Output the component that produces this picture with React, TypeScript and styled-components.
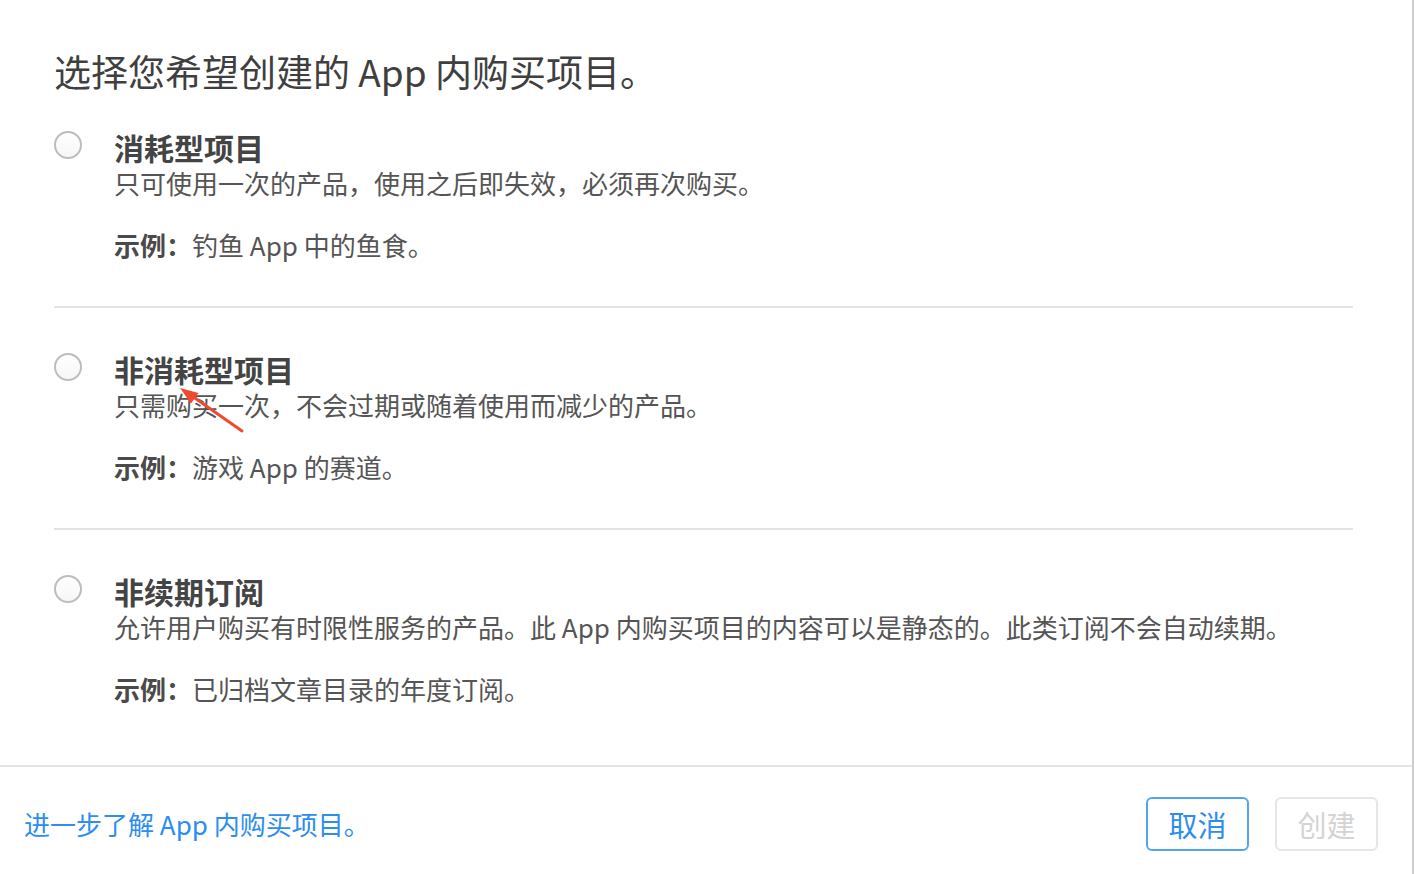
import React from 'react'
import styled, { createGlobalStyle } from 'styled-components'

const GlobalStyle = createGlobalStyle`
  html, body {
    margin: 0;
    padding: 0;
    background: #fff;
  }
  body {
    font-family: "Noto Sans CJK SC", "Liberation Sans", sans-serif;
    -webkit-font-smoothing: antialiased;
  }
`

// whole sheet, with the grey edge on its right
const Sheet = styled.div`
  position: relative;
  width: 1412px;
  height: 874px;
  border-right: 2px solid #cdcdcd;
  display: flex;
  flex-direction: column;
  background: #fff;
`

const Body = styled.div`
  flex: 1;
  padding: 48px 59px 0 54px;
`

const Heading = styled.h1`
  margin: 0 0 35px;
  font-size: 37px;
  line-height: 46px;
  font-weight: 400;
  color: #3f3f3f;
`

const Option = styled.label<{ $last?: boolean }>`
  display: grid;
  grid-template-columns: 28px 1fr;
  column-gap: 32px;
  padding: 0 0 ${p => (p.$last ? '0' : '43px')};
  margin-bottom: ${p => (p.$last ? '0' : '43px')};
  border-bottom: ${p => (p.$last ? 'none' : '2px solid #e4e4e4')};
  cursor: pointer;
`

const Radio = styled.span`
  box-sizing: border-box;
  width: 28px;
  height: 28px;
  margin-top: 2px;
  border-radius: 50%;
  border: 2px solid #bdbdbd;
  background: linear-gradient(#ffffff, #f6f6f6);
`

const OptionText = styled.div`
  display: flex;
  flex-direction: column;
`

const OptionTitle = styled.div`
  font-size: 30px;
  line-height: 36px;
  font-weight: 600;
  color: #444;
`

const OptionDesc = styled.div`
  font-size: 26px;
  line-height: 36px;
  color: #555;
`

const Example = styled.div`
  margin-top: 26px;
  font-size: 26px;
  line-height: 36px;
  color: #555;
  b {
    font-weight: 600;
    color: #4a4a4a;
  }
`

const Footer = styled.div`
  height: 109px;
  border-top: 2px solid #e4e4e4;
  box-sizing: border-box;
  padding: 30px 34px 0 24px;
  display: flex;
  align-items: flex-start;
  justify-content: space-between;
`

const LearnMore = styled.a`
  margin-top: 10px;
  font-size: 26px;
  line-height: 34px;
  color: #2d8df0;
  text-decoration: none;
`

const Buttons = styled.div`
  display: flex;
  gap: 26px;
`

const Button = styled.button<{ $disabled?: boolean }>`
  box-sizing: border-box;
  width: 103px;
  height: 54px;
  border-radius: 6px;
  background: #fff;
  font-family: inherit;
  font-size: 29px;
  line-height: 1;
  border: 2px solid ${p => (p.$disabled ? '#e6e6e6' : '#4ea6f5')};
  color: ${p => (p.$disabled ? '#d4d4d4' : '#2d8df0')};
  padding: 0;
`

const Annotation = styled.svg`
  position: absolute;
  left: 170px;
  top: 378px;
  width: 80px;
  height: 60px;
  pointer-events: none;
`

const options = [
  {
    title: '消耗型项目',
    desc: '只可使用一次的产品，使用之后即失效，必须再次购买。',
    example: '钓鱼 App 中的鱼食。',
  },
  {
    title: '非消耗型项目',
    desc: '只需购买一次，不会过期或随着使用而减少的产品。',
    example: '游戏 App 的赛道。',
  },
  {
    title: '非续期订阅',
    desc: '允许用户购买有时限性服务的产品。此 App 内购买项目的内容可以是静态的。此类订阅不会自动续期。',
    example: '已归档文章目录的年度订阅。',
  },
]

export default function App() {
  return (
    <div lang="zh-CN">
      <GlobalStyle />
      <Sheet>
        <Body>
          <Heading>选择您希望创建的 App 内购买项目。</Heading>
          {options.map((o, i) => (
            <Option key={o.title} $last={i === options.length - 1}>
              <Radio />
              <OptionText>
                <OptionTitle>{o.title}</OptionTitle>
                <OptionDesc>{o.desc}</OptionDesc>
                <Example>
                  <b>示例：</b>{o.example}
                </Example>
              </OptionText>
            </Option>
          ))}
        </Body>
        <Footer>
          <LearnMore href="#">进一步了解 App 内购买项目。</LearnMore>
          <Buttons>
            <Button>取消</Button>
            <Button $disabled disabled>创建</Button>
          </Buttons>
        </Footer>
        {/* red arrow drawn on top of the screenshot */}
        <Annotation viewBox="0 0 80 60">
          <line x1="72" y1="53" x2="22" y2="18" stroke="#f04a2e" strokeWidth="3" strokeLinecap="round" />
          <polygon points="10,10 28.5,15 21,25.5" fill="#f04a2e" />
        </Annotation>
      </Sheet>
    </div>
  )
}
